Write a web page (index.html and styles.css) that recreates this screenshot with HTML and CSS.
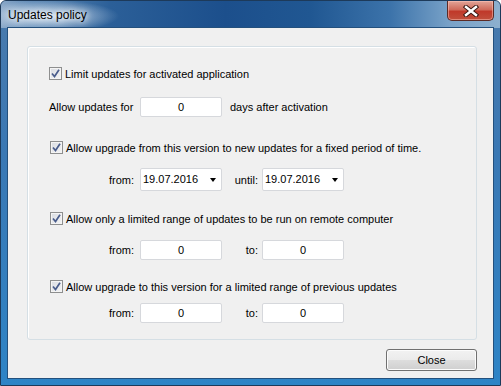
FILE: index.html
```html
<!DOCTYPE html>
<html lang="en">
<head>
    <meta charset="UTF-8">
    <meta name="viewport" content="width=device-width, initial-scale=1.0">
    <title>Updates policy</title>
    <link rel="stylesheet" href="styles.css">
</head>
<body>
    <div class="window">
        <div class="titlebar">
            <span class="title">Updates policy</span>
            <div class="close-x">
                <svg width="18" height="12" viewBox="0 0 18 12">
                    <path d="M4 2 L14 10 M14 2 L4 10" stroke="#3a1812" stroke-width="4.4" stroke-linecap="square" fill="none"/>
                    <path d="M4 2 L14 10 M14 2 L4 10" stroke="#fff" stroke-width="2.4" stroke-linecap="square" fill="none"/>
                </svg>
            </div>
        </div>

        <div class="client">
            <div class="group">
                <label class="check-row r1">
                    <span class="checkbox"><svg width="9" height="9" viewBox="0 0 9 9"><path d="M1 4.5 L3.5 7.5 L8 0.8" stroke="#4a5d8c" stroke-width="1.7" fill="none"/></svg></span>
                    <span>Limit updates for activated application</span>
                </label>
                <div class="field-row r2">
                    <span class="field-label left">Allow updates for</span>
                    <span class="textbox">0</span>
                    <span class="after">days after activation</span>
                </div>

                <label class="check-row r3">
                    <span class="checkbox"><svg width="9" height="9" viewBox="0 0 9 9"><path d="M1 4.5 L3.5 7.5 L8 0.8" stroke="#4a5d8c" stroke-width="1.7" fill="none"/></svg></span>
                    <span>Allow upgrade from this version to new updates for a fixed period of time.</span>
                </label>
                <div class="field-row r4">
                    <span class="field-label">from:</span>
                    <span class="datebox">19.07.2016<i class="arrow"></i></span>
                    <span class="field-label second">until:</span>
                    <span class="datebox">19.07.2016<i class="arrow"></i></span>
                </div>

                <label class="check-row r5">
                    <span class="checkbox"><svg width="9" height="9" viewBox="0 0 9 9"><path d="M1 4.5 L3.5 7.5 L8 0.8" stroke="#4a5d8c" stroke-width="1.7" fill="none"/></svg></span>
                    <span>Allow only a limited range of updates to be run on remote computer</span>
                </label>
                <div class="field-row r6">
                    <span class="field-label">from:</span>
                    <span class="textbox">0</span>
                    <span class="field-label second">to:</span>
                    <span class="textbox">0</span>
                </div>

                <label class="check-row r7">
                    <span class="checkbox"><svg width="9" height="9" viewBox="0 0 9 9"><path d="M1 4.5 L3.5 7.5 L8 0.8" stroke="#4a5d8c" stroke-width="1.7" fill="none"/></svg></span>
                    <span>Allow upgrade to this version for a limited range of previous updates</span>
                </label>
                <div class="field-row r8">
                    <span class="field-label">from:</span>
                    <span class="textbox">0</span>
                    <span class="field-label second">to:</span>
                    <span class="textbox">0</span>
                </div>
            </div>

            <div class="footer">
                <button class="btn">Close</button>
            </div>
        </div>
    </div>
</body>
</html>
```

FILE: styles.css
```css
body {
    margin: 0;
    background: #fff;
    font-family: 'Liberation Sans', Arial, sans-serif;
    font-size: 11px;
    color: #000;
}

.window {
    width: 501px;
    height: 386px;
    box-sizing: border-box;
    display: flex;
    flex-direction: column;
    background: linear-gradient(180deg, #4a7aac 0%, #3a78b4 40%, #2e84c6 100%);
    border: 1px solid #1d3a5a;
    border-radius: 6px 6px 0 0;
    overflow: hidden;
}

/* title bar */
.titlebar {
    height: 28px;
    display: flex;
    align-items: flex-start;
    justify-content: space-between;
    background:
        radial-gradient(ellipse 70px 16px at 48px 15px, rgba(220, 232, 244, 0.9), rgba(220, 232, 244, 0) 100%),
        linear-gradient(90deg, #8aa8c8 0%, #5f8ab6 6%, #2b5f98 22%, #1c4f8c 45%, #205792 62%, #3c73aa 78%, #79a2c8 90%, #8db0cf 100%);
}
.title {
    font-size: 12px;
    margin: 7px 0 0 7px;
    color: #000;
    text-shadow: 0 0 6px #fff, 0 0 10px #fff;
}
.close-x {
    width: 45px;
    height: 19px;
    margin-right: 6px;
    display: flex;
    justify-content: center;
    align-items: center;
    border: 1px solid #5b2a25;
    border-top: none;
    border-radius: 0 0 5px 5px;
    background: linear-gradient(180deg, #e2a598 0%, #cf6b5b 45%, #c0392a 55%, #c14f3c 100%);
    box-shadow: inset 0 0 0 1px rgba(255, 200, 190, 0.5);
}

/* client area */
.client {
    flex: 1;
    margin: 0 7px 7px 7px;
    padding: 18px 16px 7px 19px;
    background: #f0f0f0;
    box-shadow: 0 0 0 1px #23507d;
    display: flex;
    flex-direction: column;
}

.group {
    height: 294px;
    box-sizing: border-box;
    border: 1px solid #d5dfe5;
    border-radius: 3px;
    box-shadow: inset 1px 1px 0 #fff;
    padding: 15px 0 0 21px;
}

.check-row {
    display: flex;
    align-items: center;
    height: 13px;
    white-space: nowrap;
}
.checkbox {
    width: 11px;
    height: 11px;
    margin-right: 3px;
    border: 1px solid #8e8f8f;
    background: linear-gradient(135deg, #d9dce2 0%, #f4f4f4 100%);
    box-shadow: inset 0 0 0 1px #f4f4f4;
    display: flex;
    justify-content: center;
    align-items: center;
}

.field-row {
    display: flex;
    align-items: center;
    white-space: nowrap;
}
.field-label {
    width: 85px;
    padding-right: 6px;
    text-align: right;
}
.field-label.left {
    text-align: left;
}
.field-label.second {
    width: 36px;
    padding-right: 4px;
}
.textbox {
    width: 80px;
    height: 18px;
    line-height: 18px;
    text-align: center;
    background: #fff;
    border: 1px solid #d6d8dc;
    border-radius: 2px;
}
.datebox {
    width: 78px;
    height: 21px;
    line-height: 21px;
    padding-left: 2px;
    display: flex;
    justify-content: space-between;
    align-items: center;
    background: #fff;
    border: 1px solid #d6d8dc;
    border-radius: 2px;
}
.arrow {
    width: 0;
    height: 0;
    margin-right: 5px;
    border-left: 3.5px solid transparent;
    border-right: 3.5px solid transparent;
    border-top: 4px solid #000;
}
.after {
    margin-left: 8px;
}

.r1 { margin-top: 5px; }
.r2 { margin-top: 17px; height: 20px; }
.r3 { margin-top: 24px; }
.r4 { margin-top: 14px; height: 23px; }
.r5 { margin-top: 21px; }
.r6 { margin-top: 15px; height: 20px; }
.r7 { margin-top: 20px; }
.r8 { margin-top: 10px; height: 20px; }

.r3, .r5, .r7 { padding-left: 1px; }

/* bottom button */
.footer {
    display: flex;
    justify-content: flex-end;
    margin-top: 9px;
}
.btn {
    width: 91px;
    height: 22px;
    font-family: 'Liberation Sans', Arial, sans-serif;
    font-size: 11px;
    color: #000;
    border: 1px solid #707070;
    border-radius: 3px;
    background: linear-gradient(180deg, #f2f2f2 0%, #ebebeb 48%, #dddddd 52%, #cfcfcf 100%);
    box-shadow: inset 0 0 0 1px #fcfcfc;
    padding: 0;
}
```
